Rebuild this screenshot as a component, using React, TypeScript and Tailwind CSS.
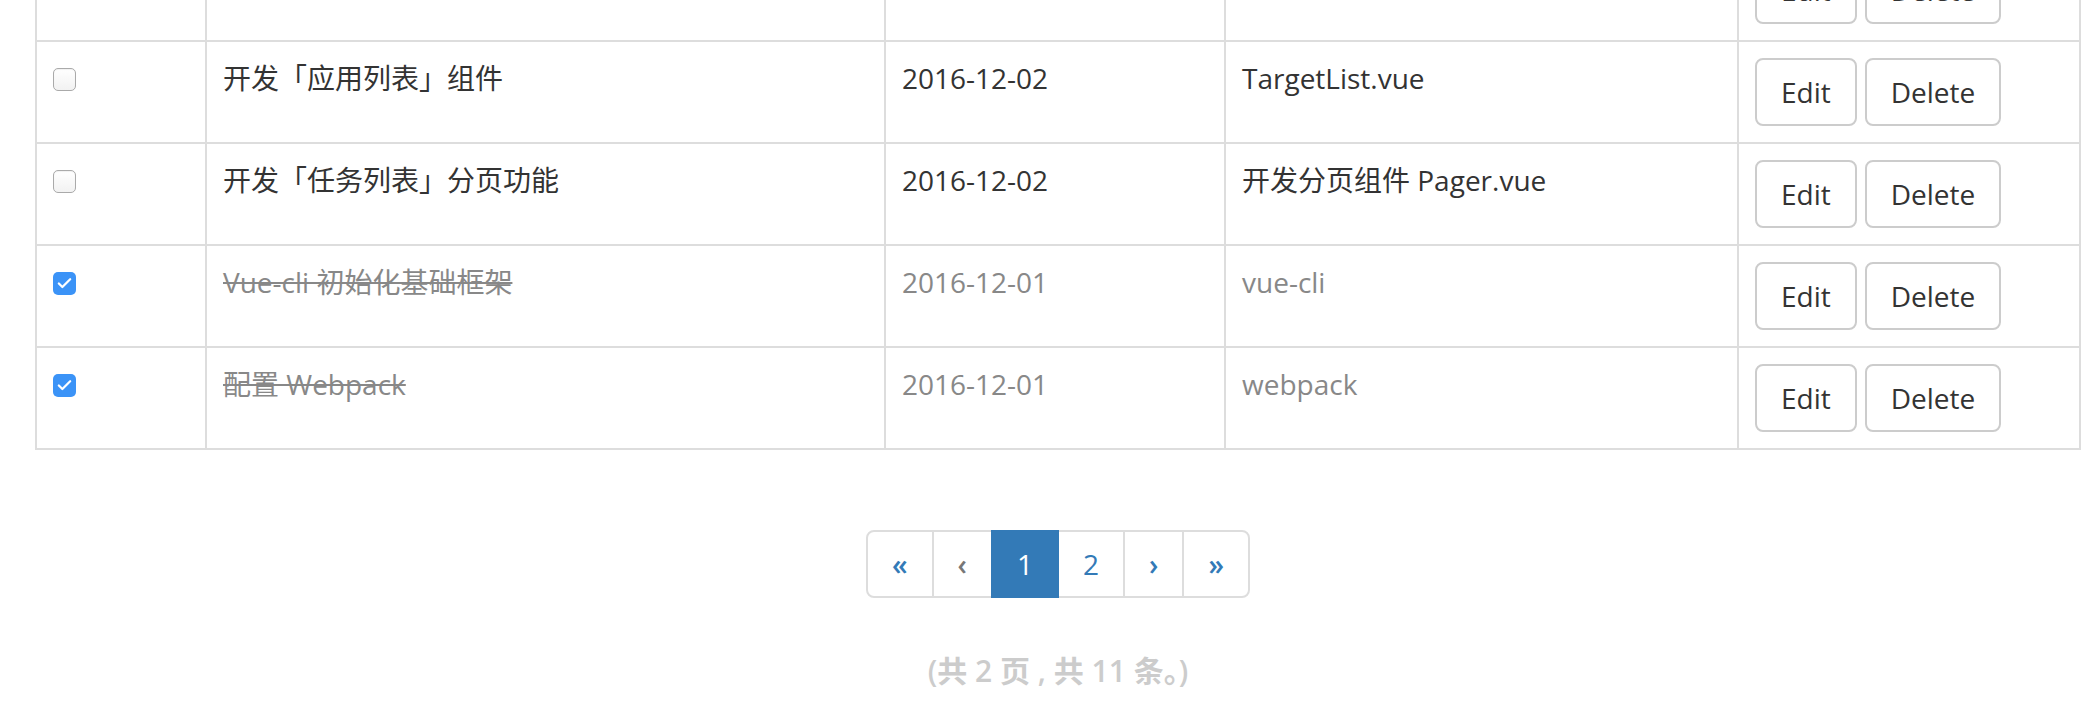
import { Check } from 'lucide-react'

type Todo = {
  title: string
  date: string
  note: string
  done: boolean
}

// first row is scrolled mostly out of view; only its buttons peek in
const todos: Todo[] = [
  { title: '', date: '', note: '', done: false },
  { title: '开发「应用列表」组件', date: '2016-12-02', note: 'TargetList.vue', done: false },
  { title: '开发「任务列表」分页功能', date: '2016-12-02', note: '开发分页组件 Pager.vue', done: false },
  { title: 'Vue-cli 初始化基础框架', date: '2016-12-01', note: 'vue-cli', done: true },
  { title: '配置 Webpack', date: '2016-12-01', note: 'webpack', done: true },
]

function Checkbox({ checked }: { checked: boolean }) {
  if (checked) {
    return (
      <div className="mt-[10px] flex h-[23px] w-[23px] items-center justify-center rounded-[5px] bg-[#3b93f7]">
        <Check className="h-[17px] w-[17px] text-white" strokeWidth={3.2} />
      </div>
    )
  }
  return (
    <div className="mt-[10px] h-[23px] w-[23px] rounded-[5px] border border-[#aaa] bg-gradient-to-b from-white to-[#f2f2f2] shadow-[inset_0_1px_1px_rgba(0,0,0,0.06)]" />
  )
}

function Btn({ children }: { children: string }) {
  return (
    <button className="rounded-[8px] border-2 border-[#ccc] bg-white px-6 py-3 text-[28px] leading-[40px] text-[#333]">
      {children}
    </button>
  )
}

function Pager() {
  const items = [
    { label: '«', kind: 'link' },
    { label: '‹', kind: 'disabled' },
    { label: '1', kind: 'active' },
    { label: '2', kind: 'link' },
    { label: '›', kind: 'link' },
    { label: '»', kind: 'link' },
  ]
  return (
    <ul className="flex">
      {items.map((it, i) => (
        <li key={i}>
          <a
            className={
              'block border-2 px-6 py-3 leading-[40px] ' +
              (it.label === '1' || it.label === '2' ? '' : 'font-semibold ') +
              (i === 0 ? 'rounded-l-[8px] ' : '-ml-[2px] ') +
              (i === items.length - 1 ? 'rounded-r-[8px] ' : '') +
              (it.kind === 'active'
                ? 'relative border-[#337ab7] bg-[#337ab7] text-white'
                : it.kind === 'disabled'
                  ? 'border-[#ddd] bg-white text-[#777]'
                  : 'border-[#ddd] bg-white text-[#337ab7]')
            }
          >
            {it.label}
          </a>
        </li>
      ))}
    </ul>
  )
}

export default function App() {
  return (
    <div className="min-h-[702px] overflow-hidden bg-white font-['Open_Sans','Noto_Sans_CJK_SC',sans-serif] text-[28px] leading-[40px] text-[#333]">
      <div className="-mt-[62px] pl-[35px]">
        <table className="w-[2046px] table-fixed border-collapse border-2 border-[#ddd]">
          <colgroup>
            <col className="w-[170px]" />
            <col className="w-[679px]" />
            <col className="w-[340px]" />
            <col className="w-[513px]" />
            <col className="w-[342px]" />
          </colgroup>
          <tbody>
            {todos.map((t, i) => {
              const tone = t.done ? 'text-[#888]' : ''
              return (
                <tr key={i}>
                  <td className="border-2 border-[#ddd] p-4 align-top">
                    <Checkbox checked={t.done} />
                  </td>
                  <td className={'border-2 border-[#ddd] p-4 align-top ' + tone + (t.done ? ' line-through' : '')}>
                    {t.title}
                  </td>
                  <td className={'border-2 border-[#ddd] p-4 align-top ' + tone}>{t.date}</td>
                  <td className={'border-2 border-[#ddd] p-4 align-top ' + tone}>{t.note}</td>
                  <td className="border-2 border-[#ddd] p-4 align-top">
                    <div className="flex gap-2">
                      <Btn>Edit</Btn>
                      <Btn>Delete</Btn>
                    </div>
                  </td>
                </tr>
              )
            })}
          </tbody>
        </table>
      </div>

      <div className="mt-[80px] flex justify-center pl-[35px] pr-[17px]">
        <Pager />
      </div>

      <p className="mt-[53px] pl-[35px] pr-[17px] text-center text-[30px] font-semibold text-[#ccc]">
        (共 2 页 , 共 11 条。)
      </p>
    </div>
  )
}
